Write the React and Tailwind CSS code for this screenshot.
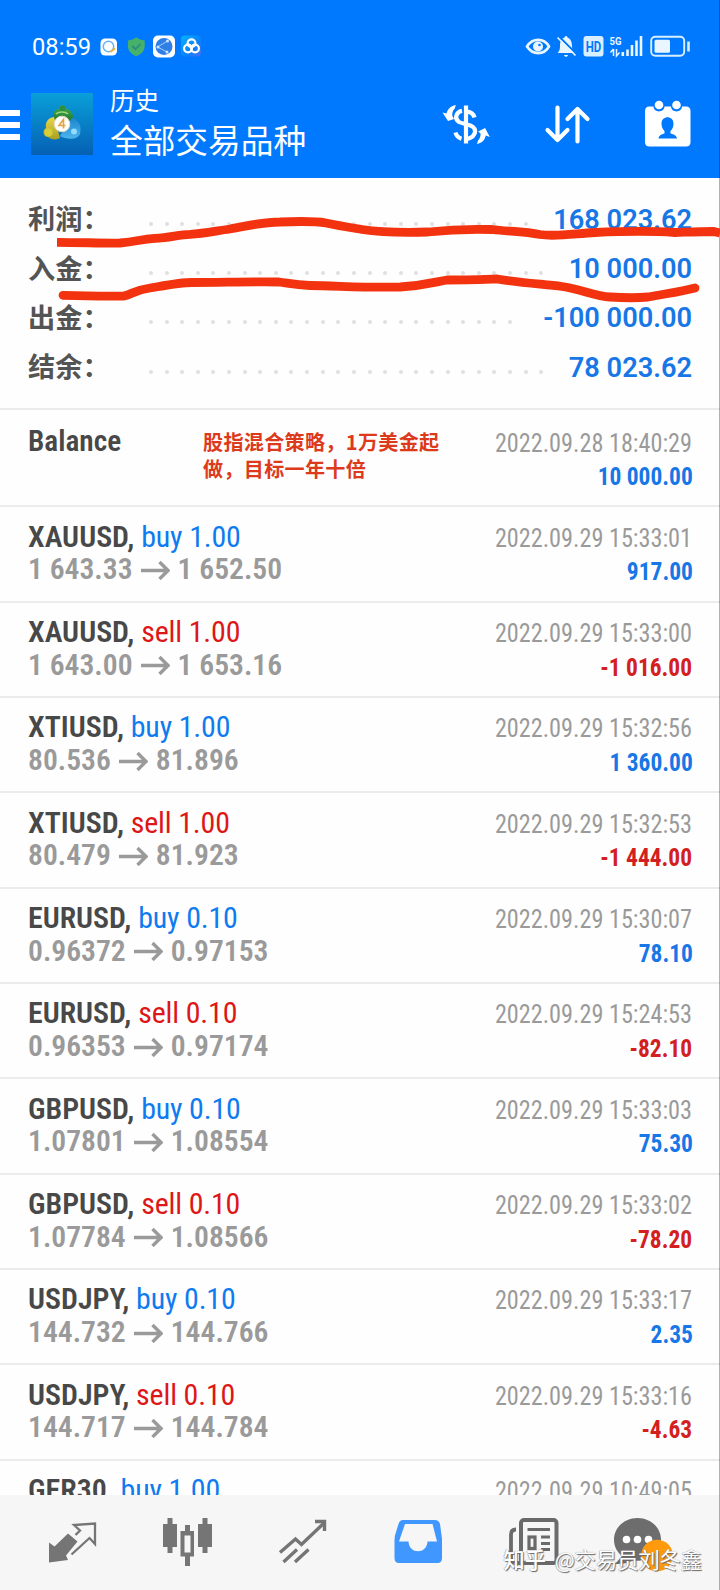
const summary = [
  { label: "利润：", value: "168 023.62", dots: 25 },
  { label: "入金：", value: "10 000.00", dots: 26 },
  { label: "出金：", value: "-100 000.00", dots: 24 },
  { label: "结余：", value: "78 023.62", dots: 26 },
];

const deals = [
  { symbol: "XAUUSD", side: "buy", volume: "1.00", from: "1 643.33", to: "1 652.50", date: "2022.09.29 15:33:01", profit: "917.00" },
  { symbol: "XAUUSD", side: "sell", volume: "1.00", from: "1 643.00", to: "1 653.16", date: "2022.09.29 15:33:00", profit: "-1 016.00" },
  { symbol: "XTIUSD", side: "buy", volume: "1.00", from: "80.536", to: "81.896", date: "2022.09.29 15:32:56", profit: "1 360.00" },
  { symbol: "XTIUSD", side: "sell", volume: "1.00", from: "80.479", to: "81.923", date: "2022.09.29 15:32:53", profit: "-1 444.00" },
  { symbol: "EURUSD", side: "buy", volume: "0.10", from: "0.96372", to: "0.97153", date: "2022.09.29 15:30:07", profit: "78.10" },
  { symbol: "EURUSD", side: "sell", volume: "0.10", from: "0.96353", to: "0.97174", date: "2022.09.29 15:24:53", profit: "-82.10" },
  { symbol: "GBPUSD", side: "buy", volume: "0.10", from: "1.07801", to: "1.08554", date: "2022.09.29 15:33:03", profit: "75.30" },
  { symbol: "GBPUSD", side: "sell", volume: "0.10", from: "1.07784", to: "1.08566", date: "2022.09.29 15:33:02", profit: "-78.20" },
  { symbol: "USDJPY", side: "buy", volume: "0.10", from: "144.732", to: "144.766", date: "2022.09.29 15:33:17", profit: "2.35" },
  { symbol: "USDJPY", side: "sell", volume: "0.10", from: "144.717", to: "144.784", date: "2022.09.29 15:33:16", profit: "-4.63" },
  { symbol: "GER30", side: "buy", volume: "1.00", from: "", to: "", date: "2022.09.29 10:49:05", profit: "" },
];

function StatusBar() {
  return (
    <div className="flex h-[92px] items-center justify-between pl-8 pr-[29px]">
      <div className="flex items-center">
        <span className="w-[60px] pt-[3px] font-[Roboto] text-[23.700px] leading-none">08:59</span>
        <svg className="ml-2 h-[24px] w-[104px]" viewBox="100 34 104 24">
          <rect x="100.5" y="38.5" width="16.5" height="17" rx="4.5" fill="#fff" />
          <circle cx="108.5" cy="46.5" r="5.2" fill="none" stroke="#6db0f7" strokeWidth="1.5" />
          <path d="M111 51.500l3.500-2.500" stroke="#f0b23c" strokeWidth="2" strokeLinecap="round" />
          <path d="M136.300 37.300c2.500 2 5.200 2.900 8.400 3.200v5.500c0 5-3.600 8.300-8.400 10.200c-4.800-1.900-8.400-5.200-8.400-10.200v-5.500c3.200-.3 5.900-1.200 8.400-3.200z" fill="#45b16a" />
          <path d="M132.300 46l3.200 3.200 5-5.200" fill="none" stroke="#2b8c7e" strokeWidth="1.800" />
          <rect x="153" y="35.500" width="22" height="22" rx="5" fill="#fff" />
          <circle cx="164" cy="46.500" r="8.500" fill="#2f7fe6" />
          <path d="M157.500 47l10-6M157.500 47l9.500 5" stroke="#a5cfff" strokeWidth="1" />
          <circle cx="158" cy="47" r="1.500" fill="#cfe6ff" /><circle cx="167.500" cy="41" r="1.500" fill="#cfe6ff" /><circle cx="167" cy="52" r="1.500" fill="#cfe6ff" />
          <defs><linearGradient id="cloud" x1="0" y1="0" x2="1" y2="1"><stop offset="0" stopColor="#06b4fa" /><stop offset="0.6" stopColor="#0a80fb" /><stop offset="1" stopColor="#4a72f0" /></linearGradient></defs>
          <rect x="181" y="35.500" width="20" height="21" rx="4" fill="url(#cloud)" />
          <g fill="none" stroke="#fff" strokeWidth="2.200"><circle cx="191.500" cy="43.200" r="3.900" /><circle cx="188" cy="48.500" r="3.900" /><circle cx="195" cy="48.500" r="3.900" /></g>
        </svg>
      </div>
      <svg className="h-[26px] w-[166px]" viewBox="525 33 166 26" fill="none">
        <path d="M527 46.500c5.500-8.800 17-8.800 22 0c-5 8.800-16.500 8.800-22 0z" stroke="#e9f6ff" strokeWidth="2.600" />
        <circle cx="538" cy="46.500" r="5" fill="#e9f6ff" /><circle cx="539.500" cy="45" r="1.300" fill="#0079ff" />
        <path d="M557.500 53h17c-2-2-2.500-3.500-2.500-7c0-4.600-2-7.600-4.500-8.400c-.3-2-2.700-2-3 0c-3 .8-4.500 3.800-4.500 8.400c0 3.500-.5 5-2.500 7zM564 55h4c-.4 2.400-3.600 2.400-4 0z" fill="#e9f6ff" />
        <path d="M559.500 37l17 17" stroke="#0079ff" strokeWidth="2" /><path d="M557.500 37.500l18 18" stroke="#e9f6ff" strokeWidth="1.700" />
        <rect x="583.500" y="36" width="20" height="20.500" rx="3" fill="#d9efff" />
        <text x="585.800" y="51.500" textLength="15.500" lengthAdjust="spacingAndGlyphs" className="font-[Roboto] text-[14px] font-bold" fill="#0079ff">HD</text>
        <text x="609.500" y="45" textLength="12" lengthAdjust="spacingAndGlyphs" className="font-[Roboto] text-[11.500px] font-bold" fill="#e9f6ff">5G</text>
        <path d="M613.500 49v7M610.500 52.500l3-3.500M616.500 49v7l3-3.500" stroke="#e9f6ff" strokeWidth="1.500" />
        <path d="M622.800 52v4M627.500 49.500v6.500M632 45v11M636.500 40.500v15.500M641 36v20" stroke="#e9f6ff" strokeWidth="2.600" />
        <rect x="651.200" y="36.700" width="33" height="19" rx="4" stroke="#d9efff" strokeWidth="1.900" />
        <rect x="654.500" y="39.700" width="15.500" height="13" rx="1.500" fill="#e9f6ff" />
        <path d="M688.500 41.500v10" stroke="#d9efff" strokeWidth="2.600" />
      </svg>
    </div>
  );
}

function AppIcon() {
  return (
    <svg className="ml-[11px] h-[62px] w-[62px]" viewBox="0 0 62 62">
      <defs>
        <linearGradient id="tile" x1="0" y1="0" x2="0" y2="1"><stop offset="0" stopColor="#0a9fd8" /><stop offset="1" stopColor="#0560b4" /></linearGradient>
        <linearGradient id="green" x1="0" y1="0" x2="0" y2="1"><stop offset="0" stopColor="#4cae48" /><stop offset="1" stopColor="#1c7a3a" /></linearGradient>
        <linearGradient id="gold" x1="0" y1="0" x2="0" y2="1"><stop offset="0" stopColor="#e8d84a" /><stop offset="1" stopColor="#a8a022" /></linearGradient>
        <linearGradient id="sky" x1="0" y1="0" x2="0" y2="1"><stop offset="0" stopColor="#1c86cf" /><stop offset="1" stopColor="#4db5ee" /></linearGradient>
      </defs>
      <rect width="62" height="62" fill="url(#tile)" />
      <path d="M22 28c-1-8 2-12 6-12c0-5 7-5 7 0c5 0 8 5 7 12z" fill="url(#green)" />
      <circle cx="31.500" cy="15.500" r="3" fill="#2c8f3f" />
      <path d="M25 21c2-2.500 9-3 12 0" fill="none" stroke="#9ad67a" strokeWidth="1.600" />
      <path d="M23 24c-6 1-9 5-8 11c-4 2-3 9 2 9c3 3 9 3 12 1z" fill="url(#gold)" />
      <circle cx="17.500" cy="39.500" r="4" fill="#d6cd3a" />
      <path d="M41 25c7 2 10 8 8 16c-3 6-13 6-20 2z" fill="url(#sky)" />
      <circle cx="43" cy="38.500" r="3" fill="#8fdcff" />
      <circle cx="31" cy="31" r="7.800" fill="#fff" stroke="#ead9b8" />
      <path d="M32.500 35.500v-9l-4.500 6h6.500" fill="none" stroke="#e5a443" strokeWidth="1.600" />
    </svg>
  );
}

function Header() {
  return (
    <header className="h-[178px] bg-[#0079ff] text-white">
      <StatusBar />
      <div className="flex h-[63px] items-center">
        <div className="flex w-5 flex-col gap-[6.500px] pt-[3px]">
          <span className="h-[5.500px] bg-white" /><span className="h-[5.500px] bg-white" /><span className="h-[5.500px] bg-white" />
        </div>
        <AppIcon />
        <div className="ml-[17px] flex flex-col pb-[6px] font-['Noto_Sans_CJK_SC']">
          <span className="text-[24.500px] leading-[36px]">历史</span>
          <span className="text-[32.700px] leading-[41px]">全部交易品种</span>
        </div>
        <svg className="ml-auto mr-[28px] h-[50px] w-[250px]" viewBox="442 98 250 50" fill="none">
          <g stroke="#fff" strokeWidth="4.200">
            <path d="M466 104.500v38" />
            <path d="M474.500 116.500c-1-4-4-6-8.500-6.200M462 109.800c-6 1.200-8 8-3 11.200c3 1.600 11 2.500 14 5c4.500 4 1 11.500-7 12M455.500 131.500c.8 3 2.500 5.200 6 6.200" />
          </g>
          <path d="M455.800 104l-1 3.500c-1.800 1.600-2.600 4-2.600 7l1.800 3.500-6 2-5.500-8.500 4 1c1-4 3.800-7.500 9.300-8.500zM477 143l1-3.500c1.800-1.600 2.600-4 2.600-7l-2.500-2 7-3.500 4.700 9-4-1.500c-1 4-3.300 7.500-8.800 8.500z" fill="#fff" />
          <path d="M557.500 106.500v32M547.500 129l10 10 10-10M577.500 140.500v-32M567.500 118l10-10 10 10" stroke="#fff" strokeWidth="4.200" strokeLinecap="round" strokeLinejoin="round" />
          <path d="M649.500 105.500h4c.5 6.500 10.500 6.500 11 0h6.500c.5 6.500 10.500 6.500 11 0h4q4.500 0 4.500 4.500v31q0 4.500-4.500 4.500h-36.500q-4.500 0-4.500-4.500v-31q0-4.500 4.500-4.500z" fill="#fff" />
          <circle cx="659" cy="104" r="4.300" fill="#fff" /><circle cx="676.500" cy="104" r="4.300" fill="#fff" />
          <path d="M658.500 137.500c.5-3.500 3-4 6-5v-2.500c-2-2-3-4-3-7.500c0-8.500 12-8.500 12 0c0 3.500-1 5.500-3 7.500v2.500c3 1 6 1.500 6.500 5z" fill="#0079ff" />
        </svg>
      </div>
    </header>
  );
}

function Summary() {
  return (
    <section className="relative h-[230px] pl-7 pr-7 pt-[16.500px]">
      {summary.map((row) => (
        <div key={row.label} className="flex h-[49.200px] items-center justify-between">
          <span className="w-[121px] whitespace-nowrap pb-[2px] font-['Noto_Sans_CJK_SC'] text-[27.200px] font-bold leading-none text-[#545454]">{row.label}</span>
          <span className="mr-auto flex gap-[11.620px] pt-2.5">
            {Array.from({ length: row.dots }, (_, i) => (
              <i key={i} className="size-1 rounded-full bg-[#e0e0e0]" />
            ))}
          </span>
          <span className="pt-[3px] font-[Roboto] text-[27.200px] font-semibold leading-none text-[#1777e6]">{row.value}</span>
        </div>
      ))}
      <svg className="absolute left-0 top-0 z-10 h-[230px] w-[720px]" viewBox="0 178 720 230" fill="none" stroke="#f3320f" strokeWidth="8.800" strokeLinejoin="round">
        <path d="M57 242.300C85 242.500 105 243.300 120 243C137 241.500 140 239.500 155 238.300C170 238 178 234.500 190 234.300C205 233.500 215 231 230 229C250 225.500 262 222 280 222C300 221.200 315 221 326 223C340 226 350 227.500 362 229.500C385 233 410 232.500 428 232C450 229.500 475 229 492 229.500C510 231.500 525 231.500 540 234.500C556 237 575 233.500 595 232.500C630 231 660 231.500 675 232.500C690 232 700 231.500 714 231.500L720 233" />
        <path d="M63 295.300C85 296 105 296.300 124 296C132 294 136 290 150 288C165 285.500 180 282.500 192 282.500C220 282.500 255 281.500 279 282C290 283.500 295 285 310 285.500C340 286 370 288 400 287C425 285.500 435 282 447 280C465 280 480 279.500 497 279C515 282 540 284 562 286.500C580 289 595 296 610 297C625 298 638 298 648 297C663 294 680 292 695 288" strokeLinecap="round" />
      </svg>
    </section>
  );
}

function Arrow() {
  return (
    <svg className="ml-[8.500px] mr-[7.500px] h-[20px] w-[29px]" viewBox="0 0 29 20" fill="none" stroke="#9a9a9a" strokeWidth="3.400">
      <path d="M0 10.500h27M18.500 2l8.500 8.500-8.500 8.500" />
    </svg>
  );
}

function DateTime({ value }) {
  return (
    <span className="origin-right translate-x-[0.500px] scale-x-[0.932] whitespace-nowrap text-[26px] text-[#9a9a9a]">{value}</span>
  );
}

function Amount({ value }) {
  return (
    <span className={"origin-right translate-x-[0.500px] scale-x-[0.912] text-[25.700px] font-bold " + (value.startsWith("-") ? "text-[#d3201f]" : "text-[#1777e6]")}>{value}</span>
  );
}

function BalanceRow() {
  return (
    <div className="flex h-[97.200px] shrink-0 justify-between border-t-2 border-[#ebebeb] px-7 pt-[14.500px] leading-[33.700px]">
      <span className="w-[175px] text-[29.300px] font-semibold text-[#484848]">Balance</span>
      <p className="w-[245px] pt-[3px] font-['Noto_Sans_CJK_SC'] text-[20.100px] font-bold leading-[27px] tracking-[0.300px] text-[#dd3a1c]">
        股指混合策略，1万美金起做，目标一年十倍
      </p>
      <div className="flex flex-1 flex-col items-end pt-0.5">
        <DateTime value="2022.09.28 18:40:29" />
        <Amount value="10 000.00" />
      </div>
    </div>
  );
}

function DealRow({ deal }) {
  return (
    <div className="flex h-[95.350px] shrink-0 justify-between border-t-2 border-[#ebebeb] px-7 pt-[12.500px] leading-[33.500px]">
      <div>
        <div className="text-[29.900px]">
          <span className="font-semibold text-[#484848]">{deal.symbol},</span>{" "}
          <span className={deal.side === "buy" ? "tracking-[-0.150px] text-[#0f7bf0]" : "tracking-[-0.150px] text-[#dd1717]"}>{deal.side} {deal.volume}</span>
        </div>
        {deal.from && (
          <div className="flex items-center text-[29.600px] font-semibold text-[#9a9a9a]">
            {deal.from}<Arrow />{deal.to}
          </div>
        )}
      </div>
      <div className="flex flex-col items-end pt-[2px]">
        <DateTime value={deal.date} />
        <Amount value={deal.profit} />
      </div>
    </div>
  );
}

function BottomNav() {
  return (
    <nav className="relative flex h-[95px] shrink-0 bg-[#f6f6f6] pl-[15px]">
      <svg className="h-[95px] w-[115px]" viewBox="15 1495 115 95">
        <path d="M49 1562.500v-20l5.500 4 13.500-13 9.500 8-11.500 14 2 4.500z" fill="#757575" />
        <path d="M71.500 1554.500l18-16.500 5.500 6v-20.500l-21 1.500 6 5.500-4.500 4.500" fill="none" stroke="#757575" strokeWidth="2.300" />
      </svg>
      <svg className="h-[95px] w-[115px]" viewBox="130 1495 115 95" fill="#757575">
        <path d="M167.500 1518h5v6h4.500v23h-4.500v6h-5v-6h-4.500v-23h4.500zM202.500 1518h5v6h4.500v23h-4.500v6h-5v-6h-4.500v-23h4.500z" />
        <path fillRule="evenodd" d="M185 1525h5v6h4v25.500h-4v9.500h-5v-9.500h-4.500v-25.500h4.500zM184.500 1535.500v17h6v-17z" />
      </svg>
      <svg className="h-[95px] w-[115px]" viewBox="245 1495 115 95" fill="none" stroke="#757575" strokeWidth="3.400">
        <path d="M280 1552.500l15.500-13.500 6 5.500 22-21M283.500 1562l13.500-12.500M295 1562l13.500-12.500" />
        <path d="M315 1521.500h9.500v9.500" />
      </svg>
      <svg className="h-[95px] w-[115px]" viewBox="360 1495 115 95">
        <path fillRule="evenodd" d="M403 1520h31.500q4.500 0 5.500 4l2 15v19q0 5-4.500 5h-38.500q-4.500 0-4.500-5v-18q0-4 1.500-8l2.500-8q1.200-4 4.500-4zM405 1524l-6 17.500h9.500c.5 13 18.500 13 19 0h9.500l-4.500-17.500z" fill="#3f97ff" />
      </svg>
      <svg className="h-[95px] w-[115px]" viewBox="475 1495 115 95" fill="none" stroke="#6a6a6a">
        <rect x="521" y="1520" width="35.500" height="43" rx="3" strokeWidth="4" />
        <path d="M516 1529.500q-5 0-5 5v23q0 5.500 5 5.500h8" strokeWidth="3.800" />
        <path d="M527.500 1529.500h22.500M541 1537h9M541 1543.500h9M541 1549.500h9" strokeWidth="3.200" />
        <rect x="529" y="1537" width="6" height="11.500" strokeWidth="3.200" />
      </svg>
      <svg className="h-[95px] w-[115px]" viewBox="590 1495 115 95">
        <path d="M637.500 1518c-13 0-23.500 9.500-23.500 21.500c0 7 3 12.500 8 16.500l-7 8c9 0 13-1 18-3.500c15 2 28-8 28-21c0-12-10.500-21.500-23.500-21.500z" fill="#6d6d6d" />
        <g fill="#fff"><circle cx="626.500" cy="1539.500" r="3.800" /><circle cx="637.500" cy="1539.500" r="3.800" /><circle cx="648.500" cy="1539.500" r="3.800" /></g>
        <circle cx="657" cy="1555.500" r="15.800" fill="#ff9a0d" />
      </svg>
      <div className="absolute right-[18px] top-[49px] flex items-center gap-[9px] whitespace-nowrap font-['Noto_Sans_CJK_SC'] text-[21.200px] leading-[30px] text-white [text-shadow:1px_1px_1px_#666,-0.5px_-0.5px_1px_#999]">
        <span className="font-medium">知乎</span>
        <span>@交易员刘冬鑫</span>
      </div>
    </nav>
  );
}

export default function App() {
  return (
    <div className="relative flex h-[1590px] w-[720px] flex-col overflow-hidden bg-[#fefefe] font-['Roboto_Condensed',Roboto,sans-serif]">
      <Header />
      <Summary />
      <main className="flex min-h-0 flex-1 flex-col overflow-hidden">
        <BalanceRow />
        {deals.map((deal) => (
          <DealRow key={deal.date} deal={deal} />
        ))}
      </main>
      <BottomNav />
      <div className="absolute right-0 top-0 h-full w-px bg-black/30" />
    </div>
  );
}
